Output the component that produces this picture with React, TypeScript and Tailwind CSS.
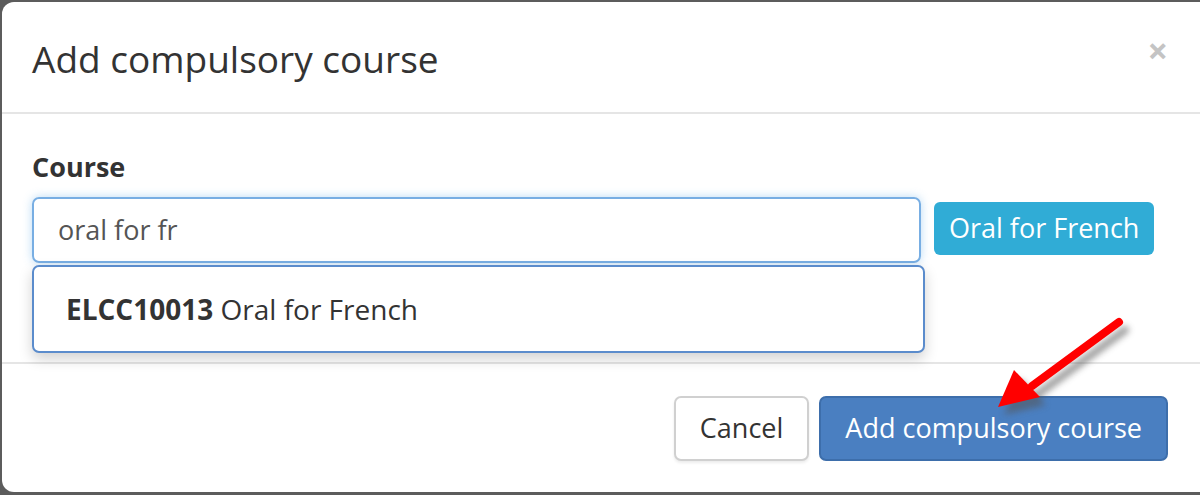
const font = { fontFamily: '"Open Sans", "Noto Sans", sans-serif' };

const RedArrow = () => (
  <svg
    className="absolute left-[980px] top-[300px]"
    width="170"
    height="125"
    viewBox="0 0 170 125"
  >
    <defs>
      <filter id="sh" x="-20%" y="-20%" width="150%" height="150%">
        <feGaussianBlur stdDeviation="3" />
      </filter>
    </defs>
    <g filter="url(#sh)" fill="#555" opacity="0.55" transform="translate(6,8)">
      <line x1="137" y1="20" x2="50" y2="84" stroke="#555" strokeWidth="8" strokeLinecap="round" />
      <polygon points="16,105 32,68 58,95" />
    </g>
    <line x1="137" y1="20" x2="50" y2="84" stroke="#ff0000" strokeWidth="8" strokeLinecap="round" />
    <polygon points="16,105 32,68 58,95" fill="#ff0000" />
  </svg>
);

export default function App() {
  return (
    <div className="w-[1200px] h-[495px] bg-[#5c5c5c] overflow-hidden pt-[2px] pl-[2px]" style={font}>
      <div className="relative w-[1210px] h-[490px] bg-white rounded-[12px] flex flex-col">
        {/* header */}
        <div className="h-[112px] flex items-center justify-between pl-[30px] pr-[44px] border-b-2 border-[#e5e5e5]">
          <h4 className="text-[37px] text-[#333] leading-none mt-[2px]">Add compulsory course</h4>
          <span className="text-[36px] font-bold text-[#c4c4c4] leading-none -mt-[12px]">×</span>
        </div>

        {/* body */}
        <div className="h-[250px] pl-[30px] pt-[36px] border-b-2 border-[#e5e5e5]">
          <label className="block text-[27px] font-bold text-[#333] leading-[34px]">Course</label>
          <div className="flex items-start gap-[13px] mt-[13px]">
            <div className="w-[889px]">
              <div className="h-[66px] border-2 border-[#78aee3] rounded-[7px] flex items-center pl-[24px] shadow-[0_0_10px_rgba(102,175,233,0.45)]">
                <span className="text-[27px] text-[#555]">oral for fr</span>
              </div>
              <div className="w-[893px] mt-[2px] h-[88px] border-2 border-[#5b8ccc] rounded-[7px] flex items-center pl-[32px] shadow-[0_6px_14px_rgba(0,0,0,0.18)] bg-white">
                <span className="text-[28px] text-[#333]">
                  <b className="font-bold">ELCC10013</b> Oral for French
                </span>
              </div>
            </div>
            <span className="mt-[5px] h-[53px] px-[15px] flex items-center bg-[#30acd6] text-white text-[27px] rounded-[6px]">
              Oral for French
            </span>
          </div>
        </div>

        {/* footer */}
        <div className="flex justify-end gap-[10px] pr-[44px] pt-[32px]">
          <button className="h-[65px] px-[24px] border-2 border-[#d0d0d0] rounded-[7px] bg-white text-[27px] text-[#333] shadow-[0_2px_3px_rgba(0,0,0,0.08)]">
            Cancel
          </button>
          <button className="h-[65px] px-[24px] border-2 border-[#3d6eab] rounded-[7px] bg-[#4a7fc1] text-[27px] text-white">
            Add compulsory course
          </button>
        </div>

        <RedArrow />
      </div>
    </div>
  );
}
